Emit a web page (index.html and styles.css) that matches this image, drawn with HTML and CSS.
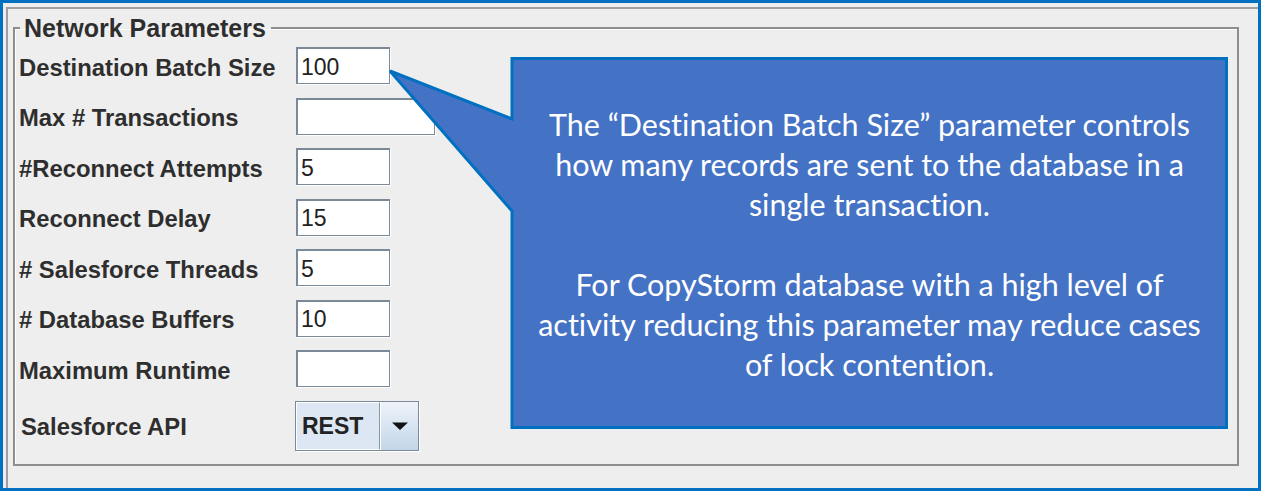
FILE: index.html
```html
<!DOCTYPE html>
<html>
<head>
<meta charset="utf-8">
<link rel="stylesheet" href="styles.css">
</head>
<body>
<div class="frame">
  <div class="window">
    <fieldset class="group">
      <legend class="group-title">Network Parameters</legend>
      <div class="form">
        <label class="lbl">Destination Batch Size</label>
        <div class="field"><span class="val">100</span></div>

        <label class="lbl">Max # Transactions</label>
        <div class="field wide"><span class="val"></span></div>

        <label class="lbl">#Reconnect Attempts</label>
        <div class="field"><span class="val">5</span></div>

        <label class="lbl">Reconnect Delay</label>
        <div class="field"><span class="val">15</span></div>

        <label class="lbl"># Salesforce Threads</label>
        <div class="field"><span class="val">5</span></div>

        <label class="lbl"># Database Buffers</label>
        <div class="field"><span class="val">10</span></div>

        <label class="lbl">Maximum Runtime</label>
        <div class="field"><span class="val"></span></div>

        <label class="lbl lbl-api">Salesforce API</label>
        <div class="combo">
          <div class="combo-value">REST</div>
          <div class="combo-btn">
            <svg width="18" height="10" viewBox="0 0 18 10"><polygon points="1,1.5 17,1.5 9,9" fill="#111"/></svg>
          </div>
        </div>
      </div>
    </fieldset>
  </div>

  <svg class="callout-shape" width="1261" height="491" viewBox="0 0 1261 491">
    <polygon points="512,59.5 1226.5,59.5 1226.5,428.5 512,428.5 512,212 390,72 512,120" fill="#4472c4" stroke="#0070c0" stroke-width="3" stroke-linejoin="miter"/>
  </svg>
  <div class="callout-text">
    <p class="para">The “Destination Batch Size” parameter controls<br>how many records are sent to the database in a<br>single transaction.</p>
    <p class="para">For CopyStorm database with a high level of<br>activity reducing this parameter may reduce cases<br>of lock contention.</p>
  </div>
</div>
</body>
</html>
```

FILE: styles.css
```css
html, body {
  margin: 0;
  padding: 0;
}

body {
  width: 1261px;
  height: 491px;
  overflow: hidden;
  background: #eeeeee;
}

.frame {
  position: relative;
  box-sizing: border-box;
  width: 1261px;
  height: 491px;
  border: 3px solid #0070c0;
  background: #eeeeee;
  padding: 4px 0 0 3px;
}

.window {
  box-sizing: border-box;
  height: 481px;
  border-top: 2px solid #a0a0a0;
  border-left: 2px solid #a0a0a0;
  padding: 6px 0 0 5px;
}

.group {
  box-sizing: border-box;
  margin: 0;
  width: 1226px;
  height: 451px;
  border: 2px solid #8e8e8e;
  box-shadow: inset 1px 1px 0 #ffffff;
  padding: 6px 0 0 4px;
}

.group-title {
  margin-left: 1px;
  padding: 0 5px 0 4px;
  font-family: "Liberation Sans", Arial, sans-serif;
  font-weight: bold;
  font-size: 25px;
  line-height: 26px;
  color: #2e2e2e;
}

.form {
  display: grid;
  grid-template-columns: 277px auto;
  grid-auto-rows: 38px;
  row-gap: 12.5px;
  justify-items: start;
}

.lbl {
  align-self: center;
  padding-top: 3px;
  font-family: "Liberation Sans", Arial, sans-serif;
  font-weight: bold;
  font-size: 23.8px;
  color: #2e2e2e;
  white-space: nowrap;
}

.lbl-api {
  padding-left: 2px;
}

.field {
  box-sizing: border-box;
  width: 94px;
  height: 37px;
  background: #ffffff;
  border: 1px solid #7a8a99;
  border-top-width: 2px;
  border-left-width: 2px;
  box-shadow: 1px 1px 0 #ffffff;
  display: flex;
  align-items: center;
  padding-left: 3px;
  padding-top: 2px;
}

.field.wide {
  width: 139px;
}

.val {
  font-family: "Liberation Sans", Arial, sans-serif;
  font-size: 23px;
  color: #222222;
}

.combo {
  box-sizing: border-box;
  height: 50px;
  width: 124px;
  margin-left: -1px;
  display: flex;
  border: 1px solid #7a8a99;
  box-shadow: 1px 1px 0 #ffffff;
  background: #ffffff;
}

.form > .combo {
  align-self: start;
}

.form > .lbl-api {
  align-self: start;
  height: 50px;
  box-sizing: border-box;
  display: flex;
  align-items: center;
}

.combo-value {
  box-sizing: border-box;
  width: 84px;
  height: 100%;
  background: #dce7f3;
  border: 1px solid #ffffff;
  border-right: 1px solid #8a98a6;
  display: flex;
  align-items: center;
  padding-left: 5px;
  padding-top: 2px;
  font-family: "Liberation Sans", Arial, sans-serif;
  font-weight: bold;
  font-size: 23px;
  color: #222222;
}

.combo-btn {
  flex: 1;
  height: 100%;
  background: linear-gradient(#eef3f9, #c3d6e9);
  border-left: 1px solid #ffffff;
  display: flex;
  align-items: center;
  justify-content: center;
}

.callout-shape {
  position: absolute;
  left: -3px;
  top: -4px;
}

.callout-text {
  position: absolute;
  left: 508px;
  top: 55px;
  width: 717px;
  height: 372px;
  display: flex;
  flex-direction: column;
  justify-content: center;
  align-items: center;
  gap: 40px;
  font-family: Lato, "Open Sans", sans-serif;
  font-size: 30.5px;
  line-height: 40px;
  font-variant-ligatures: none;
  color: #ffffff;
  text-align: center;
}

.para {
  margin: 0;
  white-space: nowrap;
}
```
